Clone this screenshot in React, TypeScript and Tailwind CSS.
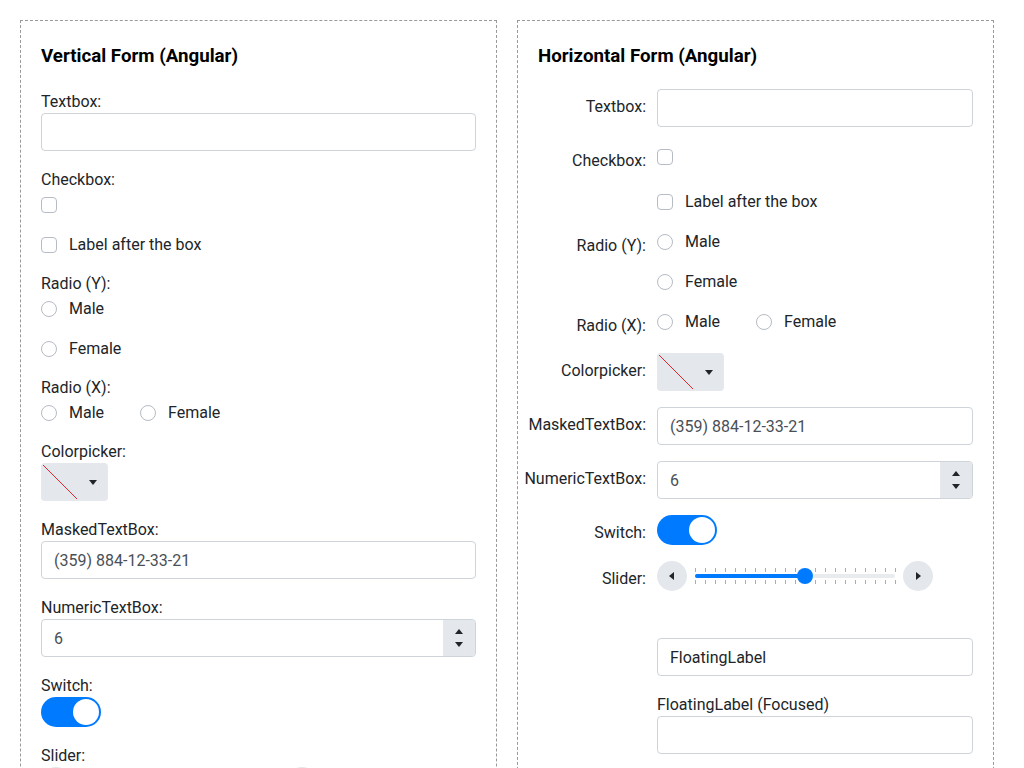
import type { ReactNode } from "react";

const Tri = ({ dir, className = "" }: { dir: "up" | "down" | "left" | "right"; className?: string }) => {
  const pts = {
    up: "0,5 4,0 8,5",
    down: "0,0 8,0 4,5",
    left: "5,0 5,8 0,4",
    right: "0,0 0,8 5,4",
  }[dir];
  const vertical = dir === "up" || dir === "down";
  return (
    <svg
      width={vertical ? 8 : 5}
      height={vertical ? 5 : 8}
      viewBox={vertical ? "0 0 8 5" : "0 0 5 8"}
      className={className}
    >
      <polygon points={pts} fill="#212529" />
    </svg>
  );
};

const TextBox = ({ value, dark }: { value?: string; dark?: boolean }) => (
  <div
    className={`h-[38px] w-full rounded-[4px] border border-[#ced4da] bg-white px-3 text-[16px] leading-[37px] ${
      dark ? "text-[#212529]" : "text-[#495057]"
    }`}
  >
    {value}
  </div>
);

const Box = () => <span className="block h-4 w-4 shrink-0 rounded-[4px] border border-[#b5bcc4] bg-white" />;
const Circle = () => <span className="block h-4 w-4 shrink-0 rounded-full border border-[#b5bcc4] bg-white" />;

// 24px rows, contents sit a hair below centre as in the reference
const CheckItem = ({ label }: { label?: string }) => (
  <div className="flex h-6 items-center gap-3 pt-[3px]">
    <Box />
    {label && <span className="leading-6">{label}</span>}
  </div>
);

const RadioItem = ({ label }: { label: string }) => (
  <div className="flex h-6 items-center gap-3 pt-[3px]">
    <Circle />
    <span className="leading-6">{label}</span>
  </div>
);

const RadioY = () => (
  <div className="flex flex-col gap-4">
    <RadioItem label="Male" />
    <RadioItem label="Female" />
  </div>
);

const RadioX = () => (
  <div className="flex gap-[36px]">
    <RadioItem label="Male" />
    <RadioItem label="Female" />
  </div>
);

const ColorPicker = () => (
  <div className="flex h-[38px] w-[67px] items-center rounded-[4px] bg-[#e4e7eb]">
    <svg width="38" height="38" viewBox="0 0 38 38" className="shrink-0">
      <line x1="2" y1="2" x2="36" y2="36" stroke="#e8242f" strokeWidth="1" />
    </svg>
    <div className="flex flex-1 items-center justify-center pr-[2px]">
      <Tri dir="down" />
    </div>
  </div>
);

const Numeric = () => (
  <div className="flex h-[38px] w-full overflow-hidden rounded-[4px] border border-[#ced4da] bg-white">
    <div className="flex-1 px-3 leading-[37px] text-[#495057]">6</div>
    <div className="flex w-[32px] flex-col items-center justify-center gap-[8px] bg-[#e4e7eb]">
      <Tri dir="up" />
      <Tri dir="down" />
    </div>
  </div>
);

const Switch = () => (
  <div className="relative h-[30px] w-[60px] rounded-full bg-[#007bff]">
    <span className="absolute right-[2px] top-[2px] h-[26px] w-[26px] rounded-full bg-white" />
  </div>
);

const Slider = () => {
  const ticks = Array.from({ length: 21 }, (_, i) => i * 10 + 0.5);
  return (
    <div className="flex h-[30px] items-center">
      <div className="flex h-[30px] w-[30px] items-center justify-center rounded-full bg-[#e4e7eb]">
        <Tri dir="left" className="-ml-[1px]" />
      </div>
      <svg width="216" height="30" viewBox="0 0 216 30" className="shrink-0">
        <g transform="translate(8,0)">
          {ticks.map((x) => (
            <g key={x} stroke="#a8adb3" strokeWidth="1">
              <line x1={x} y1="7" x2={x} y2="11" />
              <line x1={x} y1="19" x2={x} y2="23" />
            </g>
          ))}
          <rect x="0" y="13" width="200" height="4" rx="2" fill="#e9ecef" />
          <rect x="0" y="13" width="110" height="4" rx="2" fill="#007bff" />
          <circle cx="110" cy="15" r="8" fill="#007bff" />
        </g>
      </svg>
      <div className="flex h-[30px] w-[30px] items-center justify-center rounded-full bg-[#e4e7eb]">
        <Tri dir="right" className="ml-[1px]" />
      </div>
    </div>
  );
};

const Field = ({ label, children }: { label?: string; children: ReactNode }) => (
  <div className="flex flex-col">
    {label && <div className="-mb-[2px] leading-[26px]">{label}</div>}
    {children}
  </div>
);

const Row = ({ label, children }: { label?: string; children: ReactNode }) => (
  <div className="flex items-start gap-[11px]">
    <div
      className={`flex w-[108px] shrink-0 justify-end whitespace-nowrap ${
        label ? "-mb-[2px] pt-[5px] leading-[26px]" : ""
      }`}
    >
      {label}
    </div>
    <div className="min-w-0 flex-1">{children}</div>
  </div>
);

const Panel = ({ title, children }: { title: string; children: ReactNode }) => (
  <div className="w-[477px] shrink-0 border border-dashed border-[#999] px-5 pb-10 pt-5">
    <h2 className="mb-[19px] pt-[1px] text-[18.72px] font-bold leading-[28px] text-black">{title}</h2>
    {children}
  </div>
);

export default function App() {
  return (
    <div className="min-h-screen bg-white font-['Roboto',sans-serif] text-[16px] text-[#212529]">
      <div className="flex items-start gap-5 p-5">
        <Panel title="Vertical Form (Angular)">
          <div className="flex flex-col gap-4">
            <Field label="Textbox:">
              <TextBox />
            </Field>
            <Field label="Checkbox:">
              <CheckItem />
            </Field>
            <CheckItem label="Label after the box" />
            <Field label="Radio (Y):">
              <RadioY />
            </Field>
            <Field label="Radio (X):">
              <RadioX />
            </Field>
            <Field label="Colorpicker:">
              <ColorPicker />
            </Field>
            <Field label="MaskedTextBox:">
              <TextBox value="(359) 884-12-33-21" />
            </Field>
            <Field label="NumericTextBox:">
              <Numeric />
            </Field>
            <Field label="Switch:">
              <Switch />
            </Field>
            <Field label="Slider:">
              <Slider />
            </Field>
            <div className="pt-[7px]">
              <div className="h-6" />
              <TextBox value="FloatingLabel" dark />
            </div>
            <Field label="FloatingLabel (Focused)">
              <TextBox />
            </Field>
          </div>
        </Panel>

        <Panel title="Horizontal Form (Angular)">
          <div className="flex flex-col gap-4">
            <Row label="Textbox:">
              <TextBox />
            </Row>
            <Row label="Checkbox:">
              <CheckItem />
            </Row>
            <Row>
              <CheckItem label="Label after the box" />
            </Row>
            <Row label="Radio (Y):">
              <RadioY />
            </Row>
            <Row label="Radio (X):">
              <RadioX />
            </Row>
            <Row label="Colorpicker:">
              <ColorPicker />
            </Row>
            <Row label="MaskedTextBox:">
              <TextBox value="(359) 884-12-33-21" />
            </Row>
            <Row label="NumericTextBox:">
              <Numeric />
            </Row>
            <Row label="Switch:">
              <Switch />
            </Row>
            <Row label="Slider:">
              <Slider />
            </Row>
            <Row>
              <div className="pt-[7px]">
                <div className="h-6" />
                <TextBox value="FloatingLabel" dark />
              </div>
            </Row>
            <Row>
              <div className="-mb-[2px] leading-[26px]">FloatingLabel (Focused)</div>
              <TextBox />
            </Row>
          </div>
        </Panel>
      </div>
    </div>
  );
}
